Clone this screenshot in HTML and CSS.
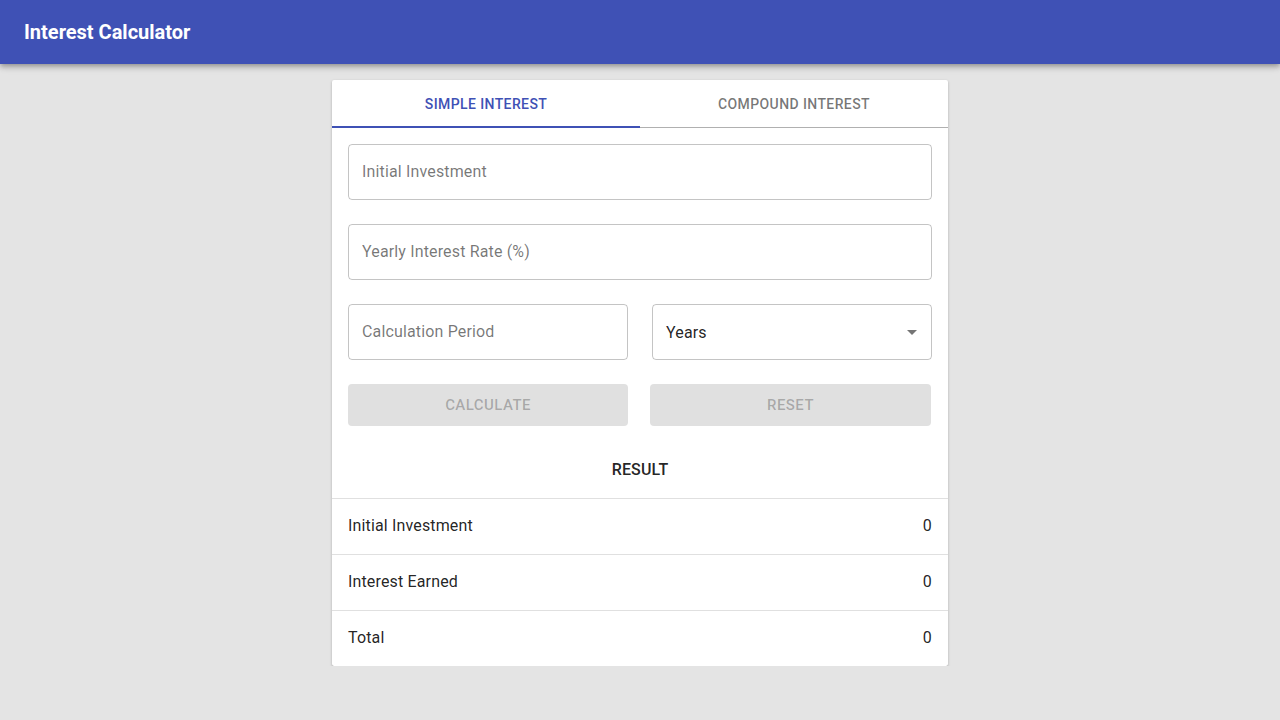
FILE: index.html
```html
<!DOCTYPE html>
<html lang="en">
<head>
    <meta charset="UTF-8">
    <meta name="viewport" content="width=device-width, initial-scale=1.0">
    <title>Interest Calculator</title>
    <link rel="stylesheet" href="styles.css">
</head>
<body>

<header class="app-bar">
    <h1 class="app-title">Interest Calculator</h1>
</header>

<main class="page">
    <div class="card">
        <div class="tabs">
            <button class="tab active">Simple Interest</button>
            <button class="tab">Compound Interest</button>
        </div>

        <form class="form">
            <div class="field">
                <input type="text" placeholder="Initial Investment">
            </div>
            <div class="field">
                <input type="text" placeholder="Yearly Interest Rate (%)">
            </div>
            <div class="row">
                <div class="field">
                    <input type="text" placeholder="Calculation Period">
                </div>
                <div class="field select-field">
                    <span class="select-value">Years</span>
                    <svg class="select-arrow" width="24" height="24" viewBox="0 0 24 24"><path d="M7 10l5 5 5-5z" fill="rgba(0,0,0,0.54)"/></svg>
                </div>
            </div>
            <div class="row buttons">
                <button type="button" class="btn" disabled>Calculate</button>
                <button type="button" class="btn" disabled>Reset</button>
            </div>
        </form>

        <div class="result">
            <div class="result-title">Result</div>
            <div class="result-row"><span>Initial Investment</span><span>0</span></div>
            <div class="result-row"><span>Interest Earned</span><span>0</span></div>
            <div class="result-row"><span>Total</span><span>0</span></div>
        </div>
    </div>
</main>

</body>
</html>
```

FILE: styles.css
```css
body {
    margin: 0;
    font-family: Roboto, "Liberation Sans", sans-serif;
    letter-spacing: 0.00938em;
    background-color: #e4e4e4;
    color: rgba(0, 0, 0, 0.87);
}
.app-bar {
    height: 64px;
    background-color: #3f51b5;
    color: #fff;
    display: flex;
    align-items: center;
    padding: 0 24px;
    box-shadow: 0 2px 4px -1px rgba(0,0,0,0.2), 0 4px 5px 0 rgba(0,0,0,0.14), 0 1px 10px 0 rgba(0,0,0,0.12);
}
.app-title {
    margin: 0;
    font-size: 20px;
    font-weight: 700;
    letter-spacing: 0;
}
.page {
    display: flex;
    justify-content: center;
    padding-top: 16px;
}
.card {
    width: 616px;
    background-color: #fff;
    border-radius: 2px;
    box-shadow: 0 1px 3px 0 rgba(0,0,0,0.2), 0 1px 1px 0 rgba(0,0,0,0.14), 0 2px 1px -1px rgba(0,0,0,0.12);
}
.tabs {
    display: flex;
    height: 48px;
    border-bottom: 1px solid #b0b0b0;
    box-sizing: border-box;
}
.tab {
    flex: 1;
    border: none;
    background: none;
    font-family: inherit;
    font-size: 14px;
    font-weight: 500;
    letter-spacing: 0.02857em;
    text-transform: uppercase;
    color: rgba(0, 0, 0, 0.54);
    padding: 1px 0 0;
    margin-bottom: -1px;
    border-bottom: 2px solid transparent;
}
.tab.active {
    color: #3f51b5;
    border-bottom-color: #3f51b5;
}
.form {
    padding: 16px 16px 0;
    display: flex;
    flex-direction: column;
    gap: 24px;
}
.row {
    display: grid;
    grid-template-columns: 1fr 1fr;
    gap: 24px;
}
.field {
    height: 56px;
    box-sizing: border-box;
    border: 1px solid rgba(0, 0, 0, 0.23);
    border-radius: 4px;
    display: flex;
    align-items: center;
    min-width: 0;
}
.field input {
    border: none;
    outline: none;
    width: 100%;
    padding: 0 13px 2px;
    font-family: inherit;
    font-size: 16px;
    letter-spacing: inherit;
    background: none;
}
.field input::placeholder {
    color: rgba(0, 0, 0, 0.54);
}
.select-field {
    justify-content: space-between;
    padding: 0 7px 0 13px;
}
.select-value {
    font-size: 16px;
}
.buttons {
    grid-template-columns: 280px 281px;
    gap: 22px;
}
.btn {
    height: 42px;
    border: none;
    border-radius: 4px;
    background-color: #e0e0e0;
    color: rgba(0, 0, 0, 0.26);
    font-family: inherit;
    font-size: 15px;
    font-weight: 500;
    letter-spacing: 0.02857em;
    text-transform: uppercase;
}
.result {
    margin-top: 16px;
}
.result-title {
    height: 56px;
    box-sizing: border-box;
    display: flex;
    align-items: center;
    justify-content: center;
    padding-bottom: 2px;
    font-size: 16px;
    font-weight: 500;
    text-transform: uppercase;
}
.result-row {
    height: 56px;
    box-sizing: border-box;
    display: flex;
    justify-content: space-between;
    align-items: center;
    padding: 0 16px 2px;
    font-size: 16px;
    border-top: 1px solid #e0e0e0;
}
```
